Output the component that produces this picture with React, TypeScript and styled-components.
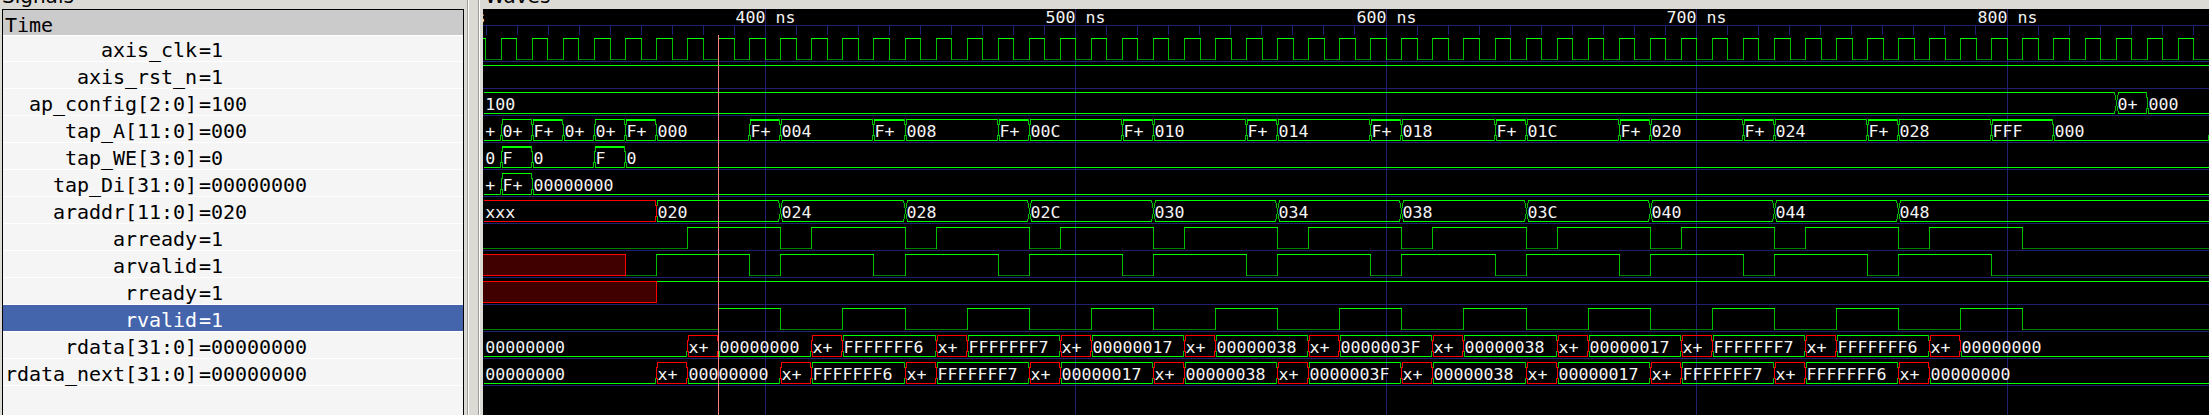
import React from "react";
import styled, { createGlobalStyle } from "styled-components";

const GlobalStyle = createGlobalStyle`
  body { margin: 0; background: #dcdad5; overflow: hidden; }
`;

const Window = styled.main`
  display: flex;
  width: 2209px;
  height: 415px;
  background: #dcdad5;
  overflow: hidden;
`;

const PaneTitle = styled.h2<{ $indent: number }>`
  display: flex;
  align-items: flex-end;
  height: 9px;
  margin: 0;
  padding: 0 0 1px ${(p) => p.$indent}px;
  box-sizing: border-box;
  overflow: hidden;
  font: 400 20px/24px "DejaVu Sans", sans-serif;
  color: #000;
`;

const SignalsPane = styled.section`
  width: 467px;
  flex: none;
`;

const SignalList = styled.div`
  margin-left: 2px;
  width: 462px;
  height: 420px;
  box-sizing: border-box;
  border: 1px solid #000;
  background: #f5f5f5;
  font: 400 20px/26px "DejaVu Sans Mono", monospace;
  letter-spacing: -0.04px;
  color: #000;
`;

const TimeHeader = styled.div`
  height: 25px;
  padding-left: 2px;
  line-height: 31px;
  background: #cbcbcb;
  border-bottom: 1px solid #fff;
`;

const SignalRow = styled.div<{ $first?: boolean; $selected?: boolean }>`
  display: flex;
  height: ${(p) => (p.$first ? 25 : 26)}px;
  line-height: ${(p) => (p.$first ? 29 : 31)}px;
  border-bottom: 1px solid #fff;
  white-space: pre;
  color: ${(p) => (p.$selected ? "#fff" : "#000")};
  background: ${(p) => (p.$selected ? "#4464ac" : "#f5f5f5")};
`;

const SignalName = styled.span`
  width: 194px;
  text-align: right;
  flex: none;
`;

const SignalValue = styled.span`
  padding-left: 2px;
`;

const Divider = styled.div`
  flex: none;
  box-sizing: border-box;
  width: 12px;
  height: 415px;
  border: solid #9d9c98;
  border-width: 0 1px;
  box-shadow: inset 1px 0 #fff, 1px 0 #fff;
  margin-right: 4px;
`;

const WavesPane = styled.section`
  flex: 1;
  min-width: 0;
`;

const WaveCanvas = styled.svg`
  display: block;
  background: #000;
  shape-rendering: crispEdges;
`;

const WaveText = styled.text`
  font: 400 16.6px "DejaVu Sans Mono", monospace;
  fill: #f4f4f4;
  white-space: pre;
`;

const GREEN = "#00ff00";
const EDGE = "#00c000";
const LOW = "#008000";
const RED = "#ff0000";
const BLUE = "#202070";

const LEFT = 483;
const TOP = 9;
const RIGHT = 2209;
const xAt = (t: number) => Math.floor(485.79 + 3.1053 * (t - 310));

type Level = 0 | 1 | "x";
type Bit = { kind: "bit"; start: Level; edges: [number, Level][] };
type Seg = { t: number; v: string; zero?: boolean; full?: boolean; wide?: boolean };
type Bus = { kind: "bus"; segs: Seg[] };
type Signal = { name: string; value: string; wave: Bit | Bus; selected?: boolean };

const seq = (n: number) => Array.from({ length: n }, (_, i) => i);
const edgeList = (first: Level, times: number[]): [number, Level][] =>
  times.map((t, i) => [t, ((i % 2) ^ (first as number)) as Level]);

const isX = (s: Seg) => s.v[0] === "x";

const clock: Bit = {
  kind: "bit",
  start: 1,
  edges: seq(112).map((i) => [310 + 5 * i, (i % 2) as Level]),
};

const arready: Bit = {
  kind: "bit",
  start: 0,
  edges: edgeList(1, [375, ...seq(10).flatMap((i) => [405 + 40 * i, 415 + 40 * i]), 805]),
};

const arvalid: Bit = {
  kind: "bit",
  start: "x",
  edges: [
    [355, 0],
    ...edgeList(1, [365, ...seq(10).flatMap((i) => [395 + 40 * i, 405 + 40 * i]), 795]),
  ],
};

const rvalid: Bit = {
  kind: "bit",
  start: 0,
  edges: edgeList(1, seq(11).flatMap((i) => [385 + 40 * i, 405 + 40 * i])),
};

const tapAddresses = ["004", "008", "00C", "010", "014", "018", "01C", "020", "024", "028"];
const readAddresses = ["024", "028", "02C", "030", "034", "038", "03C", "040", "044", "048"];
const readData = [
  "00000000", "FFFFFFF6", "FFFFFFF7", "00000017", "00000038", "0000003F",
  "00000038", "00000017", "FFFFFFF7", "FFFFFFF6", "00000000",
];

const dataBus = (t0: number): Bus => ({
  kind: "bus",
  segs: [
    { t: 0, v: "00000000", zero: true },
    ...readData.flatMap((v, i) => [
      { t: t0 + 40 * i, v: "x+" },
      { t: t0 + 40 * i + 10, v, zero: v === "00000000" },
    ]),
  ],
});

const signals: Signal[] = [
  { name: "axis_clk", value: "1", wave: clock },
  { name: "axis_rst_n", value: "1", wave: { kind: "bit", start: 1, edges: [] } },
  {
    name: "ap_config[2:0]",
    value: "100",
    wave: {
      kind: "bus",
      segs: [
        { t: 0, v: "100" },
        { t: 835, v: "0+", wide: true },
        { t: 845, v: "000", zero: true },
      ],
    },
  },
  {
    name: "tap_A[11:0]",
    value: "000",
    wave: {
      kind: "bus",
      segs: [
        { t: 0, v: "+", zero: true },
        { t: 315, v: "0+" },
        { t: 325, v: "F+", full: true },
        { t: 335, v: "0+", zero: true },
        { t: 345, v: "0+" },
        { t: 355, v: "F+", full: true },
        { t: 365, v: "000", zero: true },
        ...tapAddresses.flatMap((v, i) => [
          { t: 395 + 40 * i, v: "F+", full: true },
          { t: 405 + 40 * i, v },
        ]),
        { t: 795, v: "FFF", full: true },
        { t: 815, v: "000", zero: true },
        { t: 865, v: "" },
      ],
    },
  },
  {
    name: "tap_WE[3:0]",
    value: "0",
    wave: {
      kind: "bus",
      segs: [
        { t: 0, v: "0", zero: true },
        { t: 315, v: "F", full: true },
        { t: 325, v: "0", zero: true },
        { t: 345, v: "F", full: true },
        { t: 355, v: "0", zero: true },
      ],
    },
  },
  {
    name: "tap_Di[31:0]",
    value: "00000000",
    wave: {
      kind: "bus",
      segs: [
        { t: 0, v: "+", zero: true },
        { t: 315, v: "F+" },
        { t: 325, v: "00000000", zero: true },
      ],
    },
  },
  {
    name: "araddr[11:0]",
    value: "020",
    wave: {
      kind: "bus",
      segs: [
        { t: 0, v: "xxx" },
        { t: 365, v: "020" },
        ...readAddresses.map((v, i) => ({ t: 405 + 40 * i, v, wide: true })),
      ],
    },
  },
  { name: "arready", value: "1", wave: arready },
  { name: "arvalid", value: "1", wave: arvalid },
  { name: "rready", value: "1", wave: { kind: "bit", start: "x", edges: [[365, 1]] } },
  { name: "rvalid", value: "1", wave: rvalid, selected: true },
  { name: "rdata[31:0]", value: "00000000", wave: dataBus(375) },
  { name: "rdata_next[31:0]", value: "00000000", wave: dataBus(365) },
];

/* One-pixel lines with inclusive end points. */
const HLine = ({ x1, x2, y, c, h = 1 }: { x1: number; x2: number; y: number; c: string; h?: number }) => (
  <rect x={x1} y={y} width={Math.max(0, x2 - x1 + 1)} height={h} fill={c} />
);
const VLine = ({ x, y1, y2, c }: { x: number; y1: number; y2: number; c: string }) => (
  <rect x={x} y={y1} width={1} height={y2 - y1 + 1} fill={c} />
);

const BitWave = ({ wave, y }: { wave: Bit; y: number }) => {
  const points: [number, Level][] = [
    [LEFT, wave.start],
    ...wave.edges.map(([t, l]) => [xAt(t), l] as [number, Level]),
  ];
  return (
    <g>
      {points.map(([x, level], i) => {
        const end = i + 1 < points.length ? points[i + 1][0] : RIGHT;
        if (x > RIGHT) return null;
        if (level === "x")
          return (
            <g key={i}>
              <rect x={x} y={y} width={end - x} height={22} fill="#400000" />
              <HLine x1={x} x2={end} y={y} c={RED} />
              <HLine x1={x} x2={end} y={y + 21} c={RED} />
            </g>
          );
        const fromX = i > 0 && points[i - 1][1] === "x";
        return (
          <g key={i}>
            <HLine x1={x} x2={end} y={level ? y : y + 21} c={level ? GREEN : LOW} />
            {i > 0 && <VLine x={x} y1={level || fromX ? y : y + 1} y2={y + 21} c={fromX ? RED : EDGE} />}
            {i > 0 && !fromX && <HLine x1={x} x2={x} y={y} c={GREEN} />}
          </g>
        );
      })}
    </g>
  );
};

const HalfCross = ({ x, y, dir, seg, wide }: { x: number; y: number; dir: 1 | -1; seg: Seg; wide?: boolean }) => {
  const c = isX(seg) ? RED : EDGE;
  return wide ? (
    <g>
      <VLine x={x + 2 * dir} y1={y} y2={y + 2} c={c} />
      <VLine x={x + dir} y1={y + 3} y2={y + 7} c={c} />
      <VLine x={x + dir} y1={y + 14} y2={y + 18} c={c} />
      <VLine x={x + 2 * dir} y1={y + 19} y2={y + 21} c={c} />
    </g>
  ) : (
    <g>
      {!seg.zero && <VLine x={x + dir} y1={y} y2={y + 5} c={c} />}
      <VLine x={x + dir} y1={y + 16} y2={y + 21} c={c} />
    </g>
  );
};

const BusWave = ({ wave, y }: { wave: Bus; y: number }) => {
  const { segs } = wave;
  return (
    <g>
      {segs.map((s, i) => {
        const prev = segs[i - 1];
        const next = segs[i + 1];
        const x = i ? xAt(s.t) : LEFT;
        const gap = s.wide ? 2 : 1;
        const x1 = x + gap;
        const x2 = next ? xAt(next.t) - (next.wide ? 2 : 1) : RIGHT;
        const c = isX(s) ? RED : GREEN;
        const mid = prev && (isX(s) || isX(prev)) ? RED : EDGE;
        return (
          <g key={i}>
            {prev && <HalfCross x={x} y={y} dir={-1} seg={prev} wide={s.wide} />}
            {prev && <HalfCross x={x} y={y} dir={1} seg={s} wide={s.wide} />}
            {prev && <VLine x={x} y1={y + (s.wide ? 8 : 5)} y2={y + (s.wide ? 13 : 16)} c={mid} />}
            {!s.zero && <HLine x1={x1} x2={x2} y={y} h={s.full ? 2 : 1} c={c} />}
            <HLine x1={x1} x2={x2} y={y + 21} c={c} />
            <WaveText x={i ? x + 1.6 : 485.2} y={y + 18}>{s.v}</WaveText>
          </g>
        );
      })}
    </g>
  );
};

const gridTimes = [
  { label: "300 ns", x: 455 },
  { label: "400 ns", x: 765 },
  { label: "500 ns", x: 1075 },
  { label: "600 ns", x: 1386 },
  { label: "700 ns", x: 1696 },
  { label: "800 ns", x: 2007 },
];

const Waves = () => (
  <WaveCanvas width={RIGHT - LEFT} height={415 - TOP} viewBox={`${LEFT} ${TOP} ${RIGHT - LEFT} ${415 - TOP}`}>
    <HLine x1={LEFT} x2={RIGHT} y={25} c={BLUE} />
    {seq(56).map((k) => (
      <VLine key={k} x={486 + 31 * k + (k >= 29 ? 1 : 0) + (k >= 49 ? 1 : 0)} y1={26} y2={34} c={BLUE} />
    ))}
    {signals.map((s, i) => (
      <HLine key={s.name} x1={LEFT} x2={RIGHT} y={61 + 27 * i} c={BLUE} />
    ))}
    {gridTimes.map((g) => (
      <g key={g.label}>
        <VLine x={g.x} y1={TOP} y2={415} c={BLUE} />
        <WaveText x={g.x - 29.4} y={23}>{g.label}</WaveText>
      </g>
    ))}
    {signals.map((s, i) =>
      s.wave.kind === "bit" ? (
        <BitWave key={s.name} wave={s.wave} y={38 + 27 * i} />
      ) : (
        <BusWave key={s.name} wave={s.wave} y={38 + 27 * i} />
      )
    )}
    <VLine x={718} y1={35} y2={415} c="#ff8080" />
  </WaveCanvas>
);

export default function App() {
  return (
    <Window>
      <GlobalStyle />
      <SignalsPane>
        <PaneTitle $indent={2}>Signals</PaneTitle>
        <SignalList>
          <TimeHeader>Time</TimeHeader>
          {signals.map((s, i) => (
            <SignalRow key={s.name} $first={i === 0} $selected={s.selected}>
              <SignalName>{s.name}</SignalName>
              <SignalValue>={s.value}</SignalValue>
            </SignalRow>
          ))}
        </SignalList>
      </SignalsPane>
      <Divider />
      <WavesPane>
        <PaneTitle $indent={2}>Waves</PaneTitle>
        <Waves />
      </WavesPane>
    </Window>
  );
}
